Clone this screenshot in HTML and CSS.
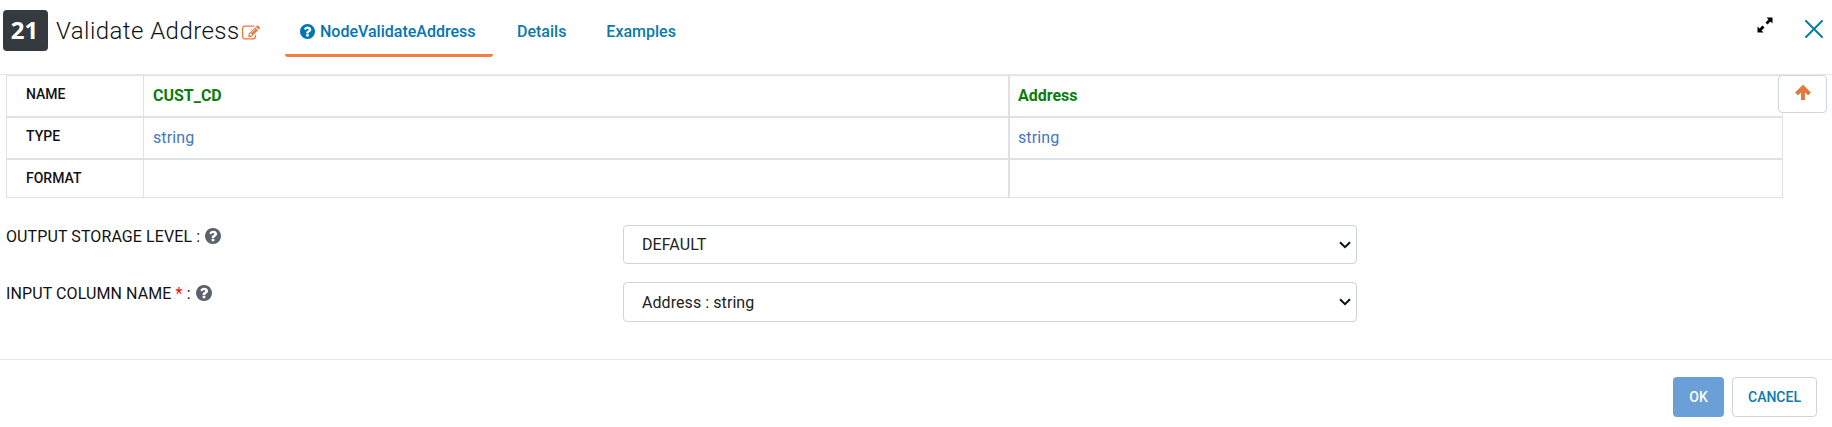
FILE: index.html
```html
<!DOCTYPE html>
<html lang="en">
<head>
<meta charset="utf-8">
<title>Validate Address</title>
<link rel="stylesheet" href="styles.css">
</head>
<body>
<svg class="sprite" width="0" height="0">
  <symbol id="help" viewBox="128 128 1536 1536"><path d="M1024 1376v-192q0-14-9-23t-23-9h-192q-14 0-23 9t-9 23v192q0 14 9 23t23 9h192q14 0 23-9t9-23zm256-672q0-88-55.5-163t-138.5-116-170-41q-243 0-371 213-15 24 8 42l132 100q7 6 19 6 16 0 25-12 53-68 86-92 34-24 86-24 48 0 85.500 26t37.500 59q0 38-20 61t-68 45q-63 28-115.500 86.500t-52.500 125.500v36q0 14 9 23t23 9h192q14 0 23-9t9-23q0-19 21.500-49.500t54.500-49.500q32-18 49-28.500t46-35 44.500-48 28-60.500 12.500-81zm384 192q0 209-103 385.500t-279.500 279.500-385.500 103-385.500-103-279.500-279.500-103-385.500 103-385.500 279.500-279.500 385.500-103 385.500 103 279.500 279.500 103 385.500z"/></symbol>
</svg>
<header class="header">
  <span class="badge">21</span>
  <h1 class="title">Validate Address</h1>
  <svg class="edit" viewBox="0 128 1792 1408"><path d="M888 1184l116-116-152-152-116 116v56h96v96h56zm440-720q-16-16-33 1l-350 350q-17 17-1 33t33-1l350-350q17-17 1-33zm80 594v190q0 119-84.500 203.500t-203.500 84.500h-832q-119 0-203.500-84.500t-84.500-203.500v-832q0-119 84.500-203.500t203.500-84.500h832q63 0 117 25 15 7 18 23 3 17-9 29l-49 49q-14 14-32 8-23-6-45-6h-832q-66 0-113 47t-47 113v832q0 66 47 113t113 47h832q66 0 113-47t47-113v-126q0-13 9-22l64-64q15-15 35-7t20 29zm-96-738l288 288-672 672h-288v-288zm444 132l-92 92-288-288 92-92q28-28 68-28t68 28l152 152q28 28 28 68t-28 68z"/></svg>
  <nav class="tabs">
    <a class="tab active"><svg class="help"><use href="#help"/></svg><span>NodeValidateAddress</span></a>
    <a class="tab">Details</a>
    <a class="tab">Examples</a>
  </nav>
  <div class="tools">
    <svg class="expand" viewBox="0 0 16 16"><path d="M9.500 0.500H15.500V6.500L13.500 4.500L10.500 7.500L8.500 5.500L11.500 2.500ZM0.500 9.500L2.500 11.500L5.500 8.500L7.500 10.500L4.500 13.500L6.500 15.500H0.500Z"/></svg>
    <svg class="close" viewBox="0 0 18 18"><path d="M1 1L17 17M17 1L1 17"/></svg>
  </div>
</header>
<main class="body">
  <div class="schema">
    <div class="cell head">NAME</div><div class="cell name">CUST_CD</div><div class="cell name last">Address</div>
    <div class="cell head">TYPE</div><div class="cell type">string</div><div class="cell type last">string</div>
    <div class="cell head">FORMAT</div><div class="cell"></div><div class="cell last"></div>
    <button class="up"><svg viewBox="0 0 16 15"><path d="M8 15V3M1.500 9L8 2.500L14.500 9"/></svg></button>
  </div>
  <div class="form">
    <div class="field"><div class="label"><span>OUTPUT STORAGE LEVEL :</span><svg class="help"><use href="#help"/></svg></div>
      <div class="select"><span>DEFAULT</span><svg class="chev" viewBox="0 0 12 8"><path d="M1 1.200L6 6.200L11 1.200"/></svg></div></div>
    <div class="field second"><div class="label"><span>INPUT COLUMN NAME <b class="req">*</b> :</span><svg class="help"><use href="#help"/></svg></div>
      <div class="select"><span>Address : string</span><svg class="chev" viewBox="0 0 12 8"><path d="M1 1.200L6 6.200L11 1.200"/></svg></div></div>
  </div>
</main>
<footer class="footer"><button class="btn ok">OK</button><button class="btn cancel">CANCEL</button></footer>
</body>
</html>
```

FILE: styles.css
```css
* { box-sizing: border-box; }
body { margin: 0; height: 427px; background: #fff; font-family: Roboto, sans-serif; font-size: 16px; color: #111; overflow: hidden; }
.sprite { display: block; }
svg { flex: none; }
.header { display: flex; align-items: flex-start; height: 75px; border-bottom: 1px solid #e5e7e9; padding-left: 3px; }
.badge { width: 45px; height: 41px; margin-top: 10px; border-radius: 4px; background: #343a40; color: #fff; font: 700 24px/40px "Noto Sans", sans-serif; text-align: center; padding-right: 2px; }
.title { margin: 14px 0 0 8px; width: 185px; font-size: 24px; line-height: 34px; font-weight: 300; letter-spacing: .45px; white-space: nowrap; }
.edit { width: 18px; height: 15px; margin: 25px 0 0 1px; fill: #e8793a; }
.tabs { display: flex; margin-left: 25px; }
.tab { display: flex; align-items: center; height: 57px; padding: 7px 16px 0 24px; font-weight: 500; color: #0a7ba8; line-height: 20px; }
.tab.active { width: 208px; padding: 10px 0 0 15px; color: #0275b8; border-bottom: 3px solid #f07f42; border-radius: 3px; }
.help { width: 16px; height: 16px; fill: #5a626b; }
.tab .help { width: 15px; height: 15px; margin: -2px 5px 0 0; fill: currentColor; }
.tools { margin-left: auto; display: flex; padding-right: 9px; }
.expand { width: 16px; height: 16px; margin-top: 17px; }
.close { width: 18px; height: 18px; margin: 20px 0 0 32px; fill: none; stroke: #0a7ba8; stroke-width: 2; stroke-linecap: round; }
.schema { position: relative; display: grid; grid-template-columns: 138px 865px 774px; grid-template-rows: 42px 42px 39px; margin-left: 6px; }
.cell { border: 1px solid #dee2e6; border-left: 0; padding: 0 9px; line-height: 39px; }
.head { border-left: 1px solid #dee2e6; padding-left: 19px; font-size: 14px; font-weight: 500; line-height: 37px; }
.last { border-left: 1px solid #dee2e6; padding-left: 8px; }
.name { font-weight: 700; color: #0b7d0b; }
.type { color: #3f78c0; letter-spacing: .1px; }
.up { position: absolute; left: 1772px; top: 0; width: 49px; height: 38px; padding: 0 0 3px; border: 1px solid #ced4da; border-radius: 4px; background: #fff; display: flex; align-items: center; justify-content: center; }
.up svg { width: 16px; height: 15px; fill: none; stroke: #e27a3f; stroke-width: 4; }
.form { padding: 27px 0 0 6px; }
.field { display: flex; height: 57px; }
.label { display: flex; width: 617px; height: 22px; line-height: 22px; gap: 5px; align-items: center; letter-spacing: .1px; }
.label span { padding-top: 1px; }
.req { color: red; font-weight: 400; }
.select { display: flex; justify-content: space-between; align-items: center; width: 734px; height: 39px; border: 1px solid #ced4da; border-radius: 4px; padding: 0 5px 0 18px; color: #222; letter-spacing: .07px; }
.second .select { height: 40px; }
.chev { width: 12px; height: 8px; fill: none; stroke: #111; stroke-width: 2; }
.footer { display: flex; justify-content: flex-end; gap: 8px; margin-top: 20px; border-top: 1px solid #e5e7e9; padding: 17px 15px 0 0; }
.btn { height: 40px; border-radius: 4px; font: 500 14px Roboto, sans-serif; }
.ok { width: 51px; background: #6a9fd8; border: 0; color: #fff; }
.cancel { width: 85px; background: #fff; border: 1px solid #ced4da; color: #0a7ab0; }
```
